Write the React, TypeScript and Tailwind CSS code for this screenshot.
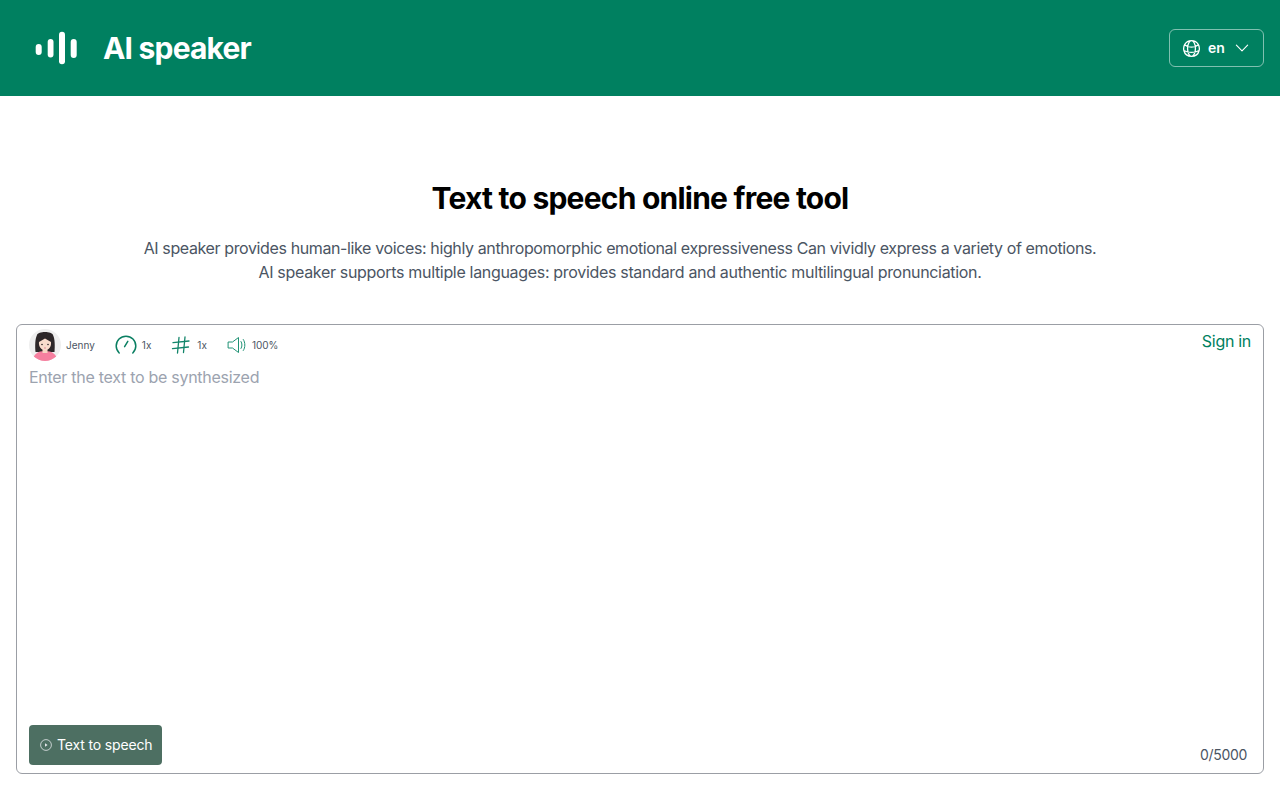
import React from "react";
import { HiOutlineChevronDown, HiOutlineGlobeAlt } from "react-icons/hi2";

function LogoBars() {
  return (
    <svg width="44" height="36" viewBox="0 0 44 36" fill="white">
      <rect x="0.7" y="14" width="6" height="11" rx="3" />
      <rect x="12.7" y="9" width="5.8" height="18.5" rx="2.9" />
      <rect x="24" y="1.7" width="6" height="32.6" rx="3" />
      <rect x="35.7" y="9" width="6" height="19" rx="3" />
    </svg>
  );
}

function Avatar() {
  return (
    <svg width="32" height="32" viewBox="0 0 32 32">
      <defs>
        <clipPath id="avatar-clip">
          <circle cx="16" cy="16" r="16" />
        </clipPath>
      </defs>
      <g clipPath="url(#avatar-clip)">
        <rect width="32" height="32" fill="#efefef" />
        <path d="M8 6 C9 2 23 2 24 6 C26 10 26 17 25.5 23 L6.5 23 C6 17 6 10 8 6 Z" fill="#2d2729" />
        <path d="M4 32 C4 25 9 22 16 22 C23 22 28 25 28 32 Z" fill="#f67f9f" />
        <rect x="13.5" y="18" width="5" height="6" fill="#f7d5c3" />
        <path d="M10 13 L16 9.5 L22 13 C22.5 17.5 20 21 16 21 C12 21 9.5 17.5 10 13 Z" fill="#f9dccc" />
        <circle cx="13" cy="15.5" r="0.8" fill="#2d2729" />
        <circle cx="19" cy="15.5" r="0.8" fill="#2d2729" />
        <path d="M15 19 H17" stroke="#d9687c" strokeWidth="0.7" />
      </g>
    </svg>
  );
}

function SpeedIcon() {
  return (
    <svg width="22" height="20" viewBox="0 0 22 20" fill="none" stroke="#0a7f62" strokeWidth="1.5" strokeLinecap="round">
      <path d="M4.2 18 A9.8 9.8 0 1 1 17.8 18" />
      <path d="M9.6 11.6 L12.8 6.4" />
    </svg>
  );
}

function HashIcon() {
  return (
    <svg width="20" height="20" viewBox="0 0 20 20" fill="none" stroke="#12856a" strokeWidth="1.3" strokeLinecap="round">
      <path d="M2 7.6 L18 6" />
      <path d="M1.5 13.6 L17.5 12" />
      <path d="M8 2.5 L6.5 18" />
      <path d="M14 2 L12.5 17.5" />
    </svg>
  );
}

function VolumeIcon() {
  return (
    <svg width="20" height="20" viewBox="0 0 20 20" fill="none" stroke="#1f9274" strokeWidth="1" strokeLinejoin="round" strokeLinecap="round">
      <path d="M1.5 7 H5.5 L11.5 2.5 V17.5 L5.5 13 H1.5 Z" />
      <path d="M14 6.5 C15.3 8.5 15.3 11.5 14 13.5" />
      <path d="M16.3 4.5 C18.4 7.5 18.4 12.5 16.3 15.5" />
    </svg>
  );
}

function PlayCircle() {
  return (
    <svg width="12" height="12" viewBox="0 0 12 12" fill="none" stroke="#e5e7eb" strokeWidth="0.8">
      <circle cx="6" cy="6" r="5.4" />
      <path d="M5 4.2 L7.6 6 L5 7.8 Z" fill="#e5e7eb" stroke="none" />
    </svg>
  );
}

export default function App() {
  return (
    <div className="min-h-screen bg-white font-['Inter',sans-serif]">
      {/* Header */}
      <header className="flex h-24 items-center justify-between bg-[#008060] pl-[35px] pr-4">
        <div className="flex items-center gap-6">
          <LogoBars />
          <span className="text-[30px] font-bold leading-9 tracking-[-0.8px] text-white">AI speaker</span>
        </div>
        <button className="flex h-[38px] w-[95px] items-center rounded-md border border-white/50 pl-[11px] text-white">
          <HiOutlineGlobeAlt size={21} />
          <span className="ml-[6px] text-sm font-semibold">en</span>
          <HiOutlineChevronDown size={18} className="ml-2" />
        </button>
      </header>

      {/* Intro */}
      <section className="px-4 pt-[84px] text-center">
        <h1 className="text-3xl font-bold leading-9 tracking-[-0.77px] text-black">Text to speech online free tool</h1>
        <p className="mt-5 pr-10 text-base leading-6 text-[#4b5563]">
          <span className="tracking-[-0.38px]">
            AI speaker provides human-like voices: highly anthropomorphic emotional expressiveness Can vividly express a variety of emotions.
          </span>
          <br />
          <span className="tracking-[-0.32px]">
            AI speaker supports multiple languages: provides standard and authentic multilingual pronunciation.
          </span>
        </p>

        {/* Editor card */}
        <div className="mt-10 flex h-[450px] flex-col rounded-md border border-[#9b9ea5] pb-2 pl-3 pr-3 pt-1 text-left">
          <div className="flex items-start justify-between">
            <div className="flex items-center text-[10px] text-[#4b5563]">
              <Avatar />
              <span className="ml-[5px]">Jenny</span>
              <span className="ml-5"><SpeedIcon /></span>
              <span className="ml-[5px]">1x</span>
              <span className="ml-5"><HashIcon /></span>
              <span className="ml-[6px]">1x</span>
              <span className="ml-5"><VolumeIcon /></span>
              <span className="ml-[5px]">100%</span>
            </div>
            <span className="text-base leading-6 tracking-[-0.3px] text-[#008060]">Sign in</span>
          </div>
          <div className="mt-1 flex-1 text-base leading-6 tracking-[-0.28px] text-[#9ca3af]">Enter the text to be synthesized</div>
          <div className="flex items-end justify-between">
            <button className="flex h-10 w-[133px] items-center gap-[5px] rounded bg-[#4d6f62] pl-[11px] text-sm tracking-[-0.15px] text-white">
              <PlayCircle />
              Text to speech
            </button>
            <span className="pr-1 text-sm leading-5 tracking-[-0.3px] text-[#4b5563]">0/5000</span>
          </div>
        </div>
      </section>
    </div>
  );
}
